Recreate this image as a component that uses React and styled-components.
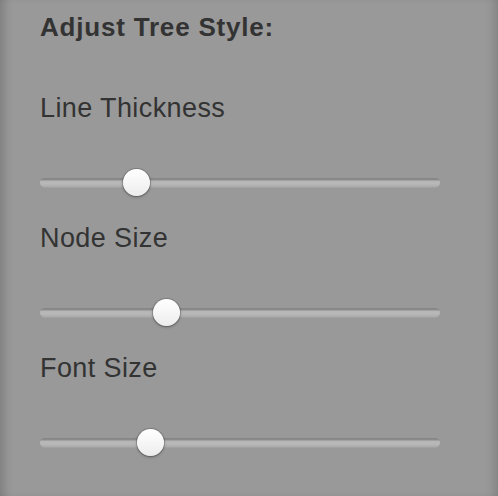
import React from "react";
import styled, { createGlobalStyle } from "styled-components";

const Global = createGlobalStyle`
  html, body { margin: 0; padding: 0; background: #999; }
  body { font-family: "Liberation Sans", Arial, sans-serif; }
`;

const Panel = styled.div`
  width: 498px;
  height: 496px;
  box-sizing: border-box;
  background: #999999;
  box-shadow: inset 10px 0 10px -6px rgba(0,0,0,0.18), inset -10px 0 10px -6px rgba(0,0,0,0.15);
  padding: 13px 0 0 40px;
  color: #333;
  overflow: hidden;
`;

const Title = styled.h3`
  margin: 0;
  font-size: 26px;
  font-weight: bold;
  line-height: 28px;
  letter-spacing: 0.8px;
`;

const Group = styled.div`
  display: flex;
  flex-direction: column;
  margin-top: ${(p) => p.$gap}px;
`;

const Label = styled.div`
  font-size: 27px;
  line-height: 30px;
  letter-spacing: 0.4px;
`;

const Track = styled.div`
  position: relative;
  width: 400px;
  height: 9px;
  margin-top: 55px;
  border-radius: 5px;
  background: linear-gradient(#858585 0, #8c8c8c 2px, #b6b6b6 3px, #b8b8b8 6px, #aaaaaa 9px);
  box-shadow: 0 1px 0 rgba(255,255,255,0.08);
`;

const Thumb = styled.div`
  position: absolute;
  top: 50%;
  width: 27px;
  height: 27px;
  margin: -14px 0 0 -14px;
  border-radius: 50%;
  background: linear-gradient(#ffffff, #f6f6f6 50%, #ececec);
  box-shadow: 0 0 0 1px rgba(0,0,0,0.15), 0 1px 3px rgba(0,0,0,0.35);
`;

const Slider = ({ pos }) => (
  <Track>
    <Thumb style={{ left: pos }} />
  </Track>
);

export default function App() {
  return (
    <>
      <Global />
      <Panel>
        <Title>Adjust Tree Style:</Title>
        <Group $gap={52}>
          <Label>Line Thickness</Label>
          <Slider pos={97} />
        </Group>
        <Group $gap={36}>
          <Label>Node Size</Label>
          <Slider pos={127} />
        </Group>
        <Group $gap={36}>
          <Label>Font Size</Label>
          <Slider pos={111} />
        </Group>
      </Panel>
    </>
  );
}
